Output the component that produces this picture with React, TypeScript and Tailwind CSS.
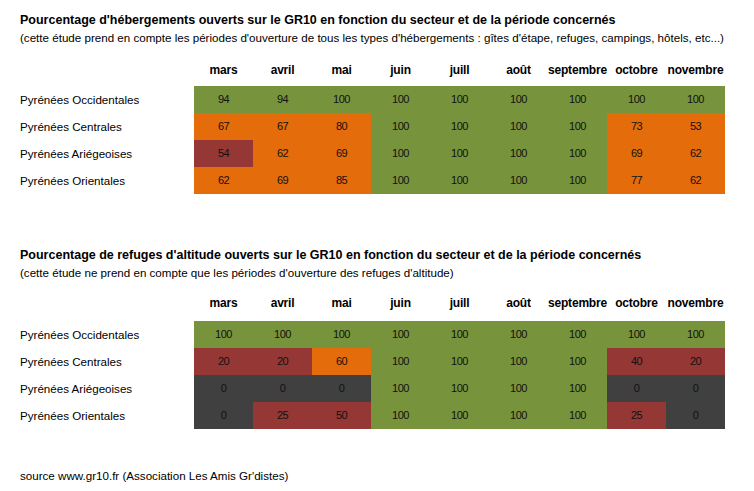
const months = ['mars', 'avril', 'mai', 'juin', 'juill', 'août', 'septembre', 'octobre', 'novembre'];

type Cell = { v: number; c: string };

const G = 'bg-[#77933c]';
const O = 'bg-[#e46c0a]';
const R = 'bg-[#953735]';
const D = 'bg-[#404040]';

const row = (vals: number[], colors: string[]): Cell[] => vals.map((v, i) => ({ v, c: colors[i] }));

const table1: { label: string; cells: Cell[] }[] = [
    { label: 'Pyrénées Occidentales', cells: row([94, 94, 100, 100, 100, 100, 100, 100, 100], [G, G, G, G, G, G, G, G, G]) },
    { label: 'Pyrénées Centrales', cells: row([67, 67, 80, 100, 100, 100, 100, 73, 53], [O, O, O, G, G, G, G, O, O]) },
    { label: 'Pyrénées Ariégeoises', cells: row([54, 62, 69, 100, 100, 100, 100, 69, 62], [R, O, O, G, G, G, G, O, O]) },
    { label: 'Pyrénées Orientales', cells: row([62, 69, 85, 100, 100, 100, 100, 77, 62], [O, O, O, G, G, G, G, O, O]) },
];

const table2: { label: string; cells: Cell[] }[] = [
    { label: 'Pyrénées Occidentales', cells: row([100, 100, 100, 100, 100, 100, 100, 100, 100], [G, G, G, G, G, G, G, G, G]) },
    { label: 'Pyrénées Centrales', cells: row([20, 20, 60, 100, 100, 100, 100, 40, 20], [R, R, O, G, G, G, G, R, R]) },
    { label: 'Pyrénées Ariégeoises', cells: row([0, 0, 0, 100, 100, 100, 100, 0, 0], [D, D, D, G, G, G, G, D, D]) },
    { label: 'Pyrénées Orientales', cells: row([0, 25, 50, 100, 100, 100, 100, 25, 0], [D, R, R, G, G, G, G, R, D]) },
];

const Header = () => (
    <div className="grid h-[16px] grid-cols-[174px_repeat(9,59px)] items-center text-[12px] font-bold leading-[16px] tracking-[-0.2px] text-black">
        <div />
        {months.map(m => (
            <div key={m} className="flex justify-center overflow-hidden whitespace-nowrap">
                <span className="shrink-0">{m}</span>
            </div>
        ))}
    </div>
);

const Table = ({ data }: { data: { label: string; cells: Cell[] }[] }) => (
    <div className="flex flex-col">
        {data.map(r => (
            <div key={r.label} className="grid h-[27px] grid-cols-[174px_repeat(9,59px)] leading-[27px]">
                <div className="text-[11.6px] text-black">{r.label}</div>
                {r.cells.map((c, i) => (
                    <div key={i} className={`${c.c} text-center text-[11px] tracking-[-0.5px] text-[#111]`}>
                        {c.v}
                    </div>
                ))}
            </div>
        ))}
    </div>
);

export default function App() {
    return (
        <div className="h-[491px] w-[754px] overflow-hidden bg-white pl-[20px] pt-[13px] font-['Liberation_Sans',Arial,sans-serif] text-black">
            <div className="h-[15px] whitespace-nowrap text-[12.5px] font-bold leading-[15px]">
                Pourcentage d'hébergements ouverts sur le GR10 en fonction du secteur et de la période concernés
            </div>
            <div className="mt-[2px] h-[15px] whitespace-nowrap text-[11.6px] leading-[15px]">
                (cette étude prend en compte les périodes d'ouverture de tous les types d'hébergements : gîtes d'étape, refuges, campings, hôtels, etc...)
            </div>
            <div className="mt-[17px]">
                <Header />
            </div>
            <div className="mt-[8px]">
                <Table data={table1} />
            </div>

            <div className="mt-[54px] h-[15px] whitespace-nowrap text-[12.5px] font-bold leading-[15px]">
                Pourcentage de refuges d'altitude ouverts sur le GR10 en fonction du secteur et de la période concernés
            </div>
            <div className="mt-[2px] h-[15px] whitespace-nowrap text-[11.6px] leading-[15px]">
                (cette étude ne prend en compte que les périodes d'ouverture des refuges d'altitude)
            </div>
            <div className="mt-[15px]">
                <Header />
            </div>
            <div className="mt-[10px]">
                <Table data={table2} />
            </div>

            <div className="mt-[39px] h-[15px] whitespace-nowrap text-[11.6px] leading-[15px]">
                source www.gr10.fr (Association Les Amis Gr'distes)
            </div>
        </div>
    );
}
